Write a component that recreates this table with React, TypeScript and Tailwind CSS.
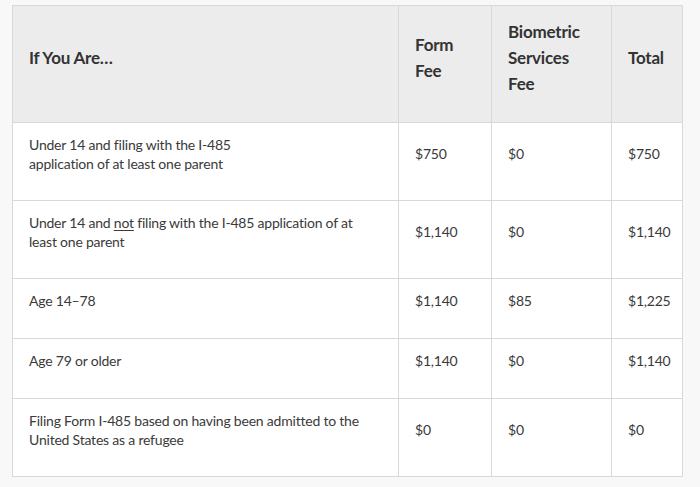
import React from "react";

type Row = {
  label: React.ReactNode;
  form: string;
  bio: string;
  total: string;
};

const rows: Row[] = [
  {
    label: (
      <>
        Under 14 and filing with the I-485
        <br />
        application of at least one parent
      </>
    ),
    form: "$750",
    bio: "$0",
    total: "$750",
  },
  {
    label: (
      <>
        Under 14 and <u className="underline-offset-2">not</u> filing with the I-485 application of at least one parent
      </>
    ),
    form: "$1,140",
    bio: "$0",
    total: "$1,140",
  },
  { label: "Age 14–78", form: "$1,140", bio: "$85", total: "$1,225" },
  { label: "Age 79 or older", form: "$1,140", bio: "$0", total: "$1,140" },
  {
    label: "Filing Form I-485 based on having been admitted to the United States as a refugee",
    form: "$0",
    bio: "$0",
    total: "$0",
  },
];

const App = () => {
  return (
    <div
      className="min-h-[487px] w-[700px] bg-[#f8f8f8] pl-[12px] pt-[5px] text-[#3a3a3a]"
      style={{ fontFamily: "Lato, 'Noto Sans', sans-serif" }}
    >
      <table className="w-[670px] table-fixed border-collapse bg-white text-[14px] leading-[19px] tracking-[-0.015em]">
        <colgroup>
          <col className="w-[386px]" />
          <col className="w-[93px]" />
          <col className="w-[120px]" />
          <col className="w-[71px]" />
        </colgroup>
        <thead>
          <tr className="h-[117px] bg-[#ececec] text-[17px] leading-[26px] font-semibold text-[#333]">
            <th className="border border-[#d8d8d8] px-4 pb-[13px] text-left">If You Are…</th>
            <th className="border border-[#d8d8d8] px-4 pb-[13px] text-left">
              Form
              <br />
              Fee
            </th>
            <th className="border border-[#d8d8d8] px-4 pb-[13px] text-left">
              Biometric
              <br />
              Services
              <br />
              Fee
            </th>
            <th className="border border-[#d8d8d8] px-4 pb-[13px] text-left">Total</th>
          </tr>
        </thead>
        <tbody>
          {rows.map((r, i) => (
            <tr key={i} className={i === 2 || i === 3 ? "h-[60px]" : "h-[78px]"}>
              <td className="border border-[#d8d8d8] px-4 pr-6 pb-[16px] align-middle">{r.label}</td>
              <td className="border border-[#d8d8d8] px-4 pb-[16px]">{r.form}</td>
              <td className="border border-[#d8d8d8] px-4 pb-[16px]">{r.bio}</td>
              <td className="border border-[#d8d8d8] px-4 pb-[16px]">{r.total}</td>
            </tr>
          ))}
        </tbody>
      </table>
    </div>
  );
};

export default App;
